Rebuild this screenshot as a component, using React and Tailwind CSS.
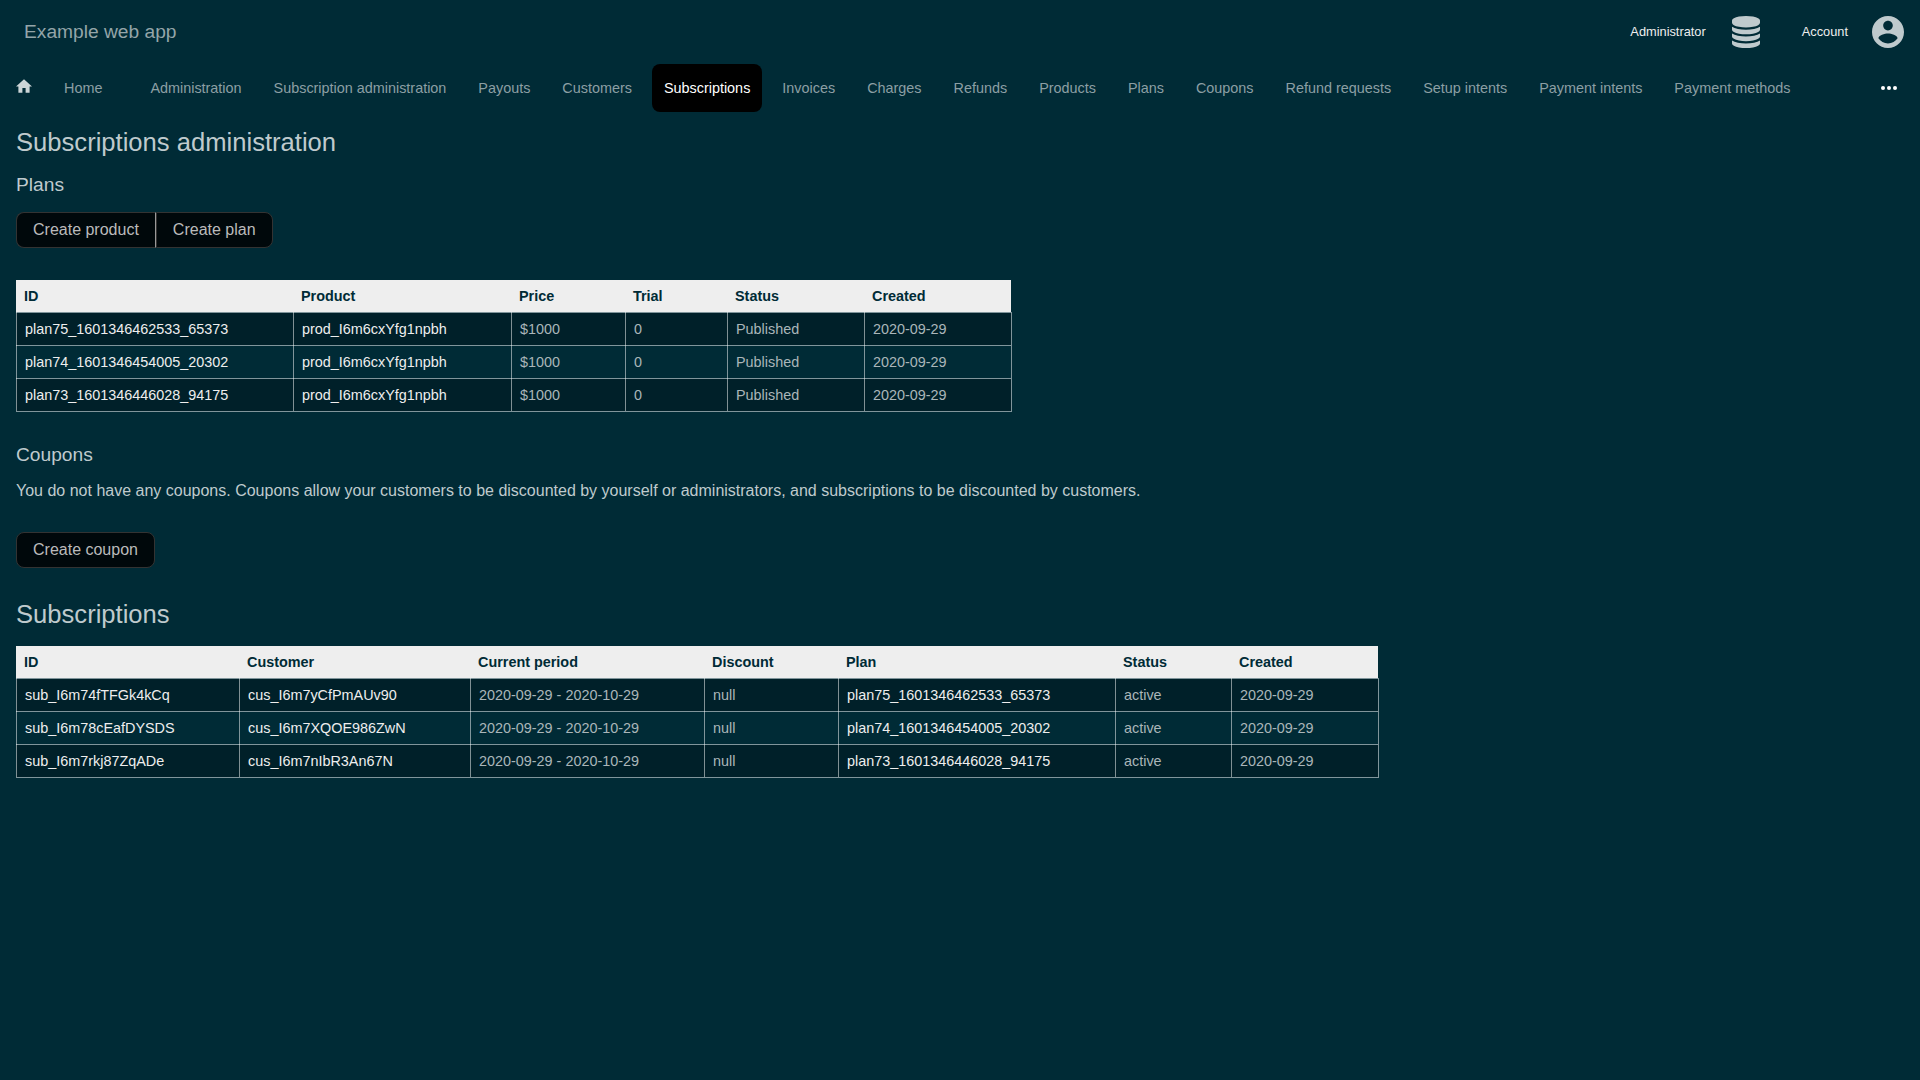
const adminLinks = [
  "Administration",
  "Subscription administration",
  "Payouts",
  "Customers",
  "Subscriptions",
  "Invoices",
  "Charges",
  "Refunds",
  "Products",
  "Plans",
  "Coupons",
  "Refund requests",
  "Setup intents",
  "Payment intents",
  "Payment methods",
];

const plans = {
  columns: [
    { name: "ID", width: "w-[277px]", link: true },
    { name: "Product", width: "w-[218px]", link: true },
    { name: "Price", width: "w-[114px]" },
    { name: "Trial", width: "w-[102px]" },
    { name: "Status", width: "w-[137px]" },
    { name: "Created", width: "w-[147px]" },
  ],
  rows: [
    ["plan75_1601346462533_65373", "prod_I6m6cxYfg1npbh", "$1000", "0", "Published", "2020-09-29"],
    ["plan74_1601346454005_20302", "prod_I6m6cxYfg1npbh", "$1000", "0", "Published", "2020-09-29"],
    ["plan73_1601346446028_94175", "prod_I6m6cxYfg1npbh", "$1000", "0", "Published", "2020-09-29"],
  ],
};

const subscriptions = {
  columns: [
    { name: "ID", width: "w-[223px]", link: true },
    { name: "Customer", width: "w-[231px]", link: true },
    { name: "Current period", width: "w-[234px]" },
    { name: "Discount", width: "w-[134px]" },
    { name: "Plan", width: "w-[277px]", link: true },
    { name: "Status", width: "w-[116px]" },
    { name: "Created", width: "w-[147px]" },
  ],
  rows: [
    ["sub_I6m74fTFGk4kCq", "cus_I6m7yCfPmAUv90", "2020-09-29 - 2020-10-29", "null", "plan75_1601346462533_65373", "active", "2020-09-29"],
    ["sub_I6m78cEafDYSDS", "cus_I6m7XQOE986ZwN", "2020-09-29 - 2020-10-29", "null", "plan74_1601346454005_20302", "active", "2020-09-29"],
    ["sub_I6m7rkj87ZqADe", "cus_I6m7nIbR3An67N", "2020-09-29 - 2020-10-29", "null", "plan73_1601346446028_94175", "active", "2020-09-29"],
  ],
};

function DatabaseIcon() {
  return (
    <svg viewBox="0 0 1536 1792" preserveAspectRatio="none" className="h-8 w-7" fill="currentColor">
      <path d="M768 768q237 0 443-43t325-127v170q0 69-103 128t-280 93.5-385 34.5-385-34.5-280-93.5-103-128v-170q119 84 325 127t443 43zm0 768q237 0 443-43t325-127v170q0 69-103 128t-280 93.5-385 34.5-385-34.5-280-93.5-103-128v-170q119 84 325 127t443 43zm0-384q237 0 443-43t325-127v170q0 69-103 128t-280 93.5-385 34.5-385-34.5-280-93.5-103-128v-170q119 84 325 127t443 43zm0-1152q208 0 385 34.5t280 93.5 103 128v128q0 69-103 128t-280 93.5-385 34.5-385-34.5-280-93.5-103-128v-128q0-69 103-128t280-93.5 385-34.5z" />
    </svg>
  );
}

function AccountIcon() {
  return (
    <svg viewBox="2 2 20 20" className="size-8" fill="currentColor">
      <path d="M12 2C6.48 2 2 6.48 2 12s4.48 10 10 10 10-4.48 10-10S17.52 2 12 2zm0 3c1.66 0 3 1.34 3 3s-1.34 3-3 3-3-1.34-3-3 1.34-3 3-3zm0 14.2c-2.5 0-4.71-1.28-6-3.22.03-1.99 4-3.08 6-3.08 1.99 0 5.97 1.09 6 3.08-1.29 1.94-3.5 3.22-6 3.22z" />
    </svg>
  );
}

function HomeIcon() {
  return (
    <svg viewBox="2 3 20 17" className="h-[14px] w-4" fill="currentColor">
      <path d="M10 20v-6h4v6h5v-8h3L12 3 2 12h3v8z" />
    </svg>
  );
}

function DataTable({ data }) {
  return (
    <div role="table" className="w-fit text-[14.4px] leading-4">
      <div role="row" className="mr-px flex h-8 items-center bg-[#eee] font-bold text-[#002b36]">
        {data.columns.map((c) => (
          <div role="columnheader" key={c.name} className={`px-2 ${c.width}`}>{c.name}</div>
        ))}
      </div>
      <div role="rowgroup" className="border-b border-white/50">
        {data.rows.map((row) => (
          <div
            role="row"
            key={row[0]}
            className="flex h-[33px] border-t border-r border-white/50 bg-clip-padding odd:bg-[#002029]"
          >
            {row.map((cell, i) => (
              <div
                role="cell"
                key={i}
                className={`-mt-px flex h-[33px] items-center border-l border-white/50 px-2 pt-px ${data.columns[i].width} ${data.columns[i].link ? "text-[#eee]" : "text-[#aab6b9]"}`}
              >
                {cell}
              </div>
            ))}
          </div>
        ))}
      </div>
    </div>
  );
}

function ButtonBar({ labels }) {
  return (
    <div className="flex">
      {labels.map((label) => (
        <button
          key={label}
          className="h-9 border border-[#333] bg-[#00080b] px-4 text-base leading-5 text-[#bbb] first:rounded-l-lg last:rounded-r-lg not-last:border-r-[#999]"
        >
          {label}
        </button>
      ))}
    </div>
  );
}

export default function App() {
  return (
    <div className="min-h-screen bg-[#002b36] font-['Liberation_Sans',Arial,sans-serif] text-[#bfcacd]">
      <header className="flex h-16 items-center justify-between pr-4 pl-6">
        <div className="text-[19.2px] text-[#94a5a9]">Example web app</div>
        <div className="flex items-center text-[12.8px] text-[#eee]">
          <span className="mr-[26px]">Administrator</span>
          <span className="mr-[42px] text-[#bfcacd]"><DatabaseIcon /></span>
          <span className="mr-6">Account</span>
          <span className="text-[#bfcacd]"><AccountIcon /></span>
        </div>
      </header>

      <nav className="flex h-12 items-center pr-[23px] pl-4 text-[14.4px] leading-4 text-[#8c9fa4]">
        <span className="mb-1 text-[#ccd5d7]"><HomeIcon /></span>
        <a className="mr-9 ml-8">Home</a>
        <div className="flex gap-2">
          {adminLinks.map((label) => (
            <a
              key={label}
              className={`flex h-12 items-center rounded-lg px-3 ${label === "Subscriptions" ? "bg-black text-white" : ""}`}
            >
              {label}
            </a>
          ))}
        </div>
        <div className="ml-auto flex gap-[2px]">
          <i className="size-1 rounded-full bg-white" />
          <i className="size-1 rounded-full bg-white" />
          <i className="size-1 rounded-full bg-white" />
        </div>
      </nav>

      <main className="px-4">
        <h1 className="pt-4 text-[25.6px] leading-7">Subscriptions administration</h1>
        <h2 className="mt-[17px] text-[19.2px] leading-6">Plans</h2>
        <div className="mt-[15px]">
          <ButtonBar labels={["Create product", "Create plan"]} />
        </div>
        <div className="mt-8">
          <DataTable data={plans} />
        </div>
        <h2 className="mt-[31px] text-[19.2px] leading-6">Coupons</h2>
        <p className="mt-3 text-base leading-6">
          You do not have any coupons. Coupons allow your customers to be discounted by yourself or administrators, and subscriptions to be discounted by customers.
        </p>
        <div className="mt-[29px]">
          <ButtonBar labels={["Create coupon"]} />
        </div>
        <h1 className="mt-8 text-[25.6px] leading-7">Subscriptions</h1>
        <div className="mt-[18px]">
          <DataTable data={subscriptions} />
        </div>
      </main>
    </div>
  );
}
